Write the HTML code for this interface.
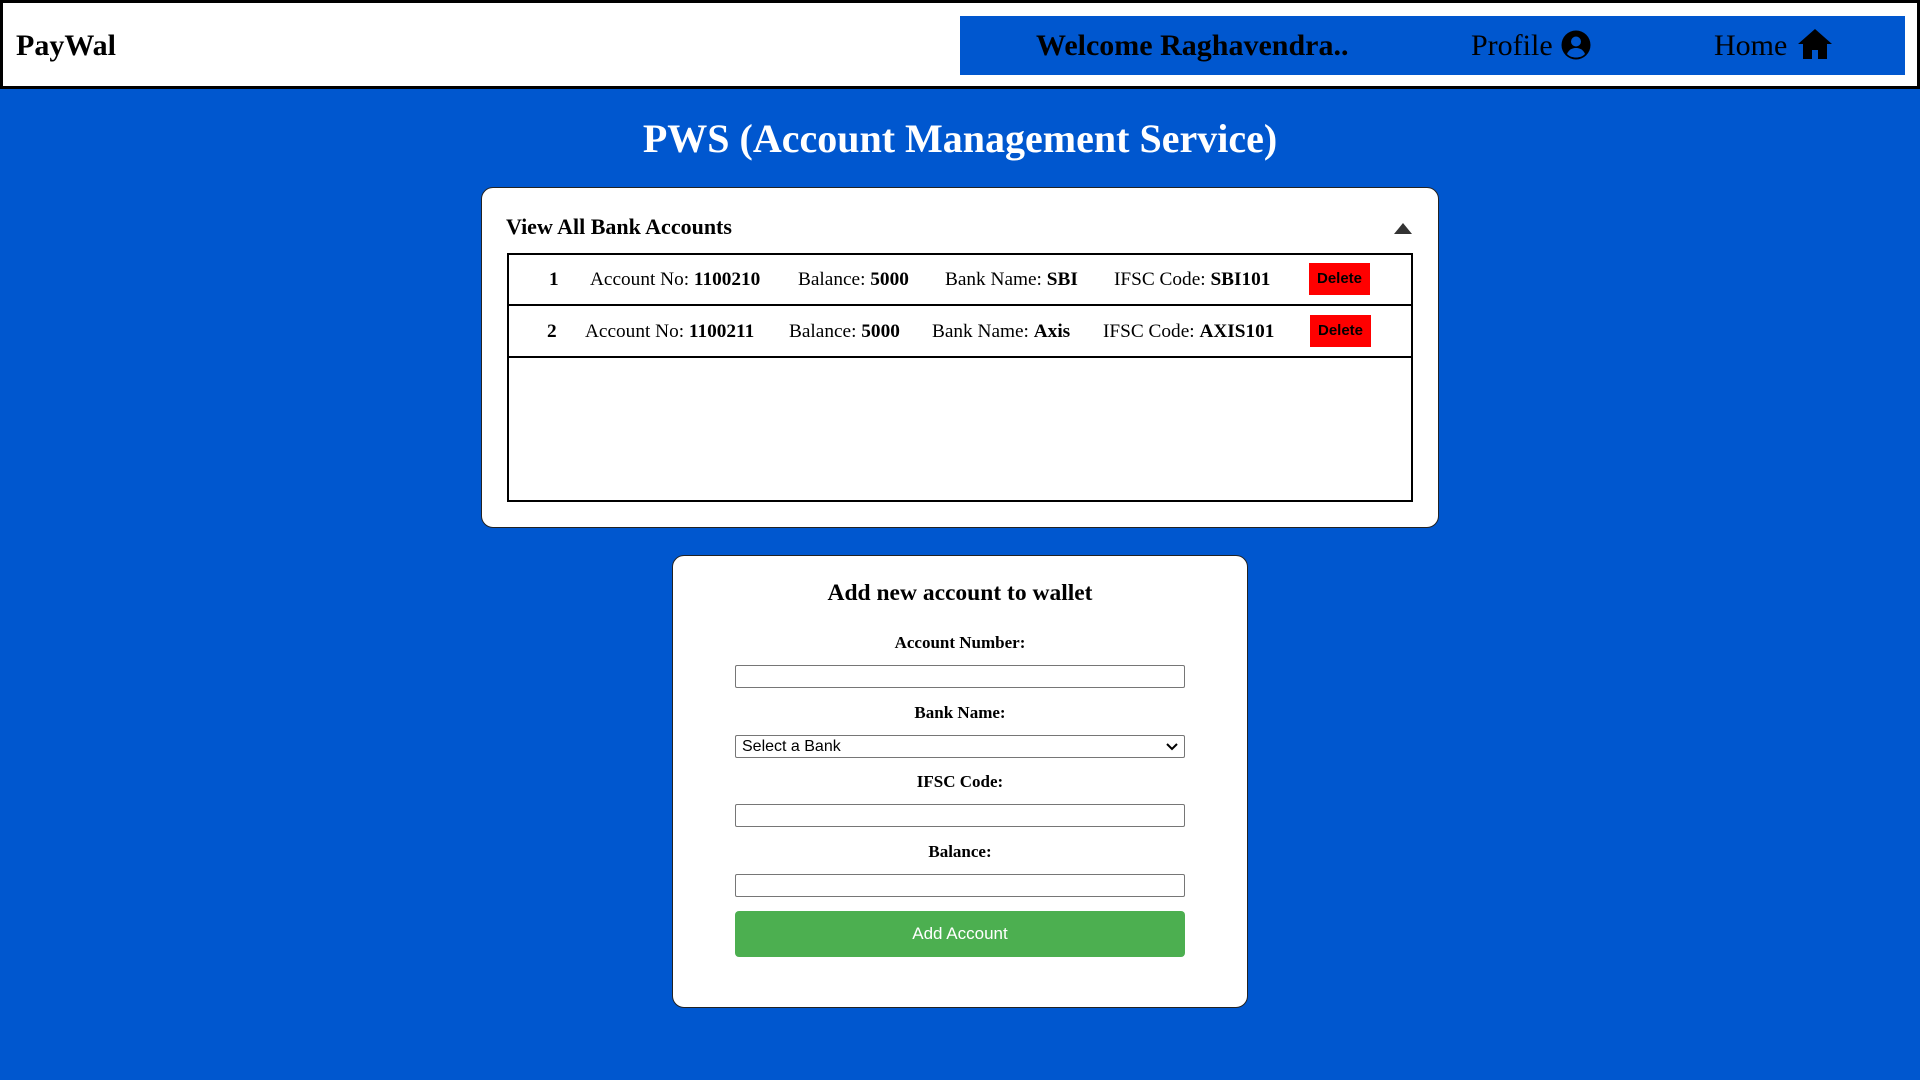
<!DOCTYPE html>
<html><head><style>
*{box-sizing:border-box;margin:0;padding:0}
body{width:1920px;height:1080px;background:#0057cf;font-family:"Liberation Serif",serif;position:relative;overflow:hidden}
.a{position:absolute}
.hdr{left:0;top:0;width:1920px;height:89px;background:#fff;border:3px solid #000}
.nav{left:960px;top:16px;width:945px;height:59px;background:#0057cf}
.nt{font-size:30px;line-height:30px;top:31px;color:#000;white-space:nowrap}
.card{background:#fff;border:1px solid #222;border-radius:12px}
.row{font-size:19.3px;line-height:20px;white-space:nowrap;color:#000}
.del{background:#f00;color:#000;font-family:"Liberation Sans",sans-serif;font-size:15px;font-weight:bold;width:61px;height:32px;line-height:32px;text-align:center}
.lbl{font-size:17px;font-weight:bold;width:100%;text-align:center;left:0}
.inp{left:735px;width:450px;height:23px;border:1px solid #767676;border-radius:2px;background:#fff}
</style></head><body>
<div class="a hdr"></div>
<div class="a" style="left:16px;top:29px;font-size:30px;font-weight:bold;line-height:34px">PayWal</div>
<div class="a nav"></div>
<div class="a nt" style="left:1036px;font-weight:bold">Welcome Raghavendra..</div>
<div class="a nt" style="left:1471px">Profile</div>
<svg class="a" style="left:1561px;top:30px" width="30" height="30" viewBox="0 0 30 30"><circle cx="15" cy="15" r="14.5" fill="#000"/><circle cx="15" cy="11.5" r="5" fill="#0057cf"/><path d="M6 24c2-5 6-6 9-6s7 1 9 6c-2.5 2.5-5.5 3.5-9 3.5S8.5 26.5 6 24z" fill="#0057cf"/></svg>
<div class="a nt" style="left:1714px">Home</div>
<svg class="a" style="left:1797px;top:28px" width="36" height="32" viewBox="0 0 36 32"><path d="M18 1L1 16h5v15h9v-9h6v9h9V16h5z" fill="#000"/></svg>

<div class="a" style="left:0;width:1920px;top:116px;text-align:center;color:#fff;font-size:40px;font-weight:bold;line-height:46px">PWS (Account Management Service)</div>

<div class="a card" style="left:481px;top:187px;width:958px;height:341px"></div>
<div class="a" style="left:506px;top:214px;font-size:22px;font-weight:bold;line-height:26px">View All Bank Accounts</div>
<svg class="a" style="left:1394px;top:223px" width="18" height="11"><path d="M0 11L9 0 18 11z" fill="#333"/></svg>
<div class="a" style="left:507px;top:253px;width:906px;height:249px;border:2px solid #000;background:#fff"></div>
<div class="a" style="left:507px;top:304px;width:906px;height:2px;background:#000"></div>
<div class="a" style="left:507px;top:356px;width:906px;height:2px;background:#000"></div>

<div class="a row" style="left:549px;top:270px"><b>1</b></div>
<div class="a row" style="left:590px;top:270px">Account No: <b>1100210</b></div>
<div class="a row" style="left:798px;top:270px">Balance: <b>5000</b></div>
<div class="a row" style="left:945px;top:270px">Bank Name: <b>SBI</b></div>
<div class="a row" style="left:1114px;top:270px">IFSC Code: <b>SBI101</b></div>
<div class="a del" style="left:1309px;top:263px">Delete</div>

<div class="a row" style="left:547px;top:322px"><b>2</b></div>
<div class="a row" style="left:585px;top:322px">Account No: <b>1100211</b></div>
<div class="a row" style="left:789px;top:322px">Balance: <b>5000</b></div>
<div class="a row" style="left:932px;top:322px">Bank Name: <b>Axis</b></div>
<div class="a row" style="left:1103px;top:322px">IFSC Code: <b>AXIS101</b></div>
<div class="a del" style="left:1310px;top:315px">Delete</div>

<div class="a card" style="left:672px;top:555px;width:576px;height:453px"></div>
<div class="a" style="left:0;width:1920px;top:580px;text-align:center;font-size:23.5px;font-weight:bold;line-height:26px">Add new account to wallet</div>
<div class="a lbl" style="top:633px">Account Number:</div>
<div class="a inp" style="top:665px"></div>
<div class="a lbl" style="top:703px">Bank Name:</div>
<div class="a inp" style="top:735px;font-family:'Liberation Sans',sans-serif;font-size:16px;line-height:21px;padding-left:6px">Select a Bank
<svg style="position:absolute;right:6px;top:6px" width="12" height="9"><path d="M1 2l5 5 5-5" stroke="#000" stroke-width="2" fill="none"/></svg></div>
<div class="a lbl" style="top:772px">IFSC Code:</div>
<div class="a inp" style="top:804px"></div>
<div class="a lbl" style="top:842px">Balance:</div>
<div class="a inp" style="top:874px"></div>
<div class="a" style="left:735px;top:911px;width:450px;height:46px;background:#4caf50;border-radius:4px;color:#fff;font-family:'Liberation Sans',sans-serif;font-size:17px;line-height:46px;text-align:center">Add Account</div>
</body></html>
